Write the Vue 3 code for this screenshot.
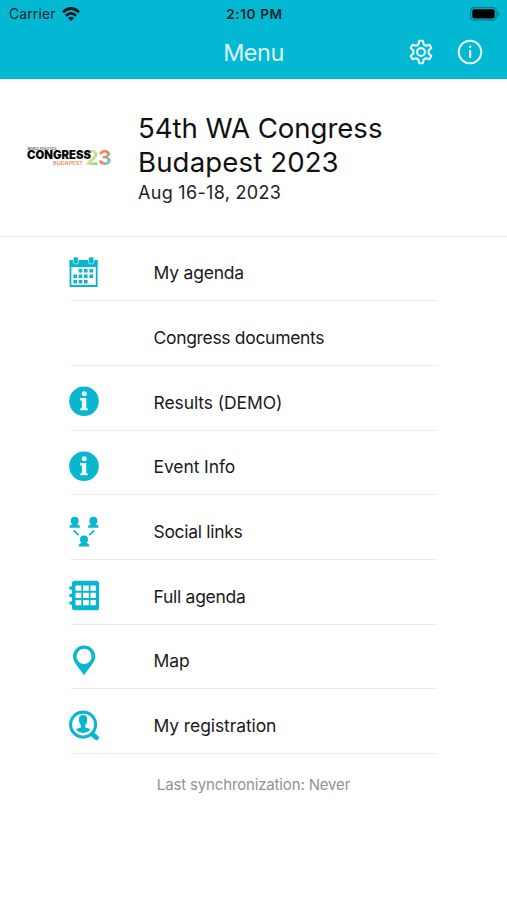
<script setup>
const items = [
  { label: 'My agenda', icon: 'calendar', key: 'my-agenda' },
  { label: 'Congress documents', icon: '', key: 'documents' },
  { label: 'Results (DEMO)', icon: 'info', key: 'results' },
  { label: 'Event Info', icon: 'info', key: 'event-info' },
  { label: 'Social links', icon: 'social', key: 'social' },
  { label: 'Full agenda', icon: 'notebook', key: 'full-agenda' },
  { label: 'Map', icon: 'pin', key: 'map' },
  { label: 'My registration', icon: 'search', key: 'registration' },
]
</script>

<template>
  <div class="screen">
    <header class="header">
      <div class="status">
        <div class="carrier">
          <span class="carrier-name">Carrier</span>
          <svg class="wifi" viewBox="0 0 18 14">
            <g fill="none" stroke="#04161a" stroke-width="2.7">
              <path d="M1 5.2Q9-2.2 17 5.2" />
              <path d="M4 8.7Q9 4.2 14 8.7" />
            </g>
            <path d="M6 10.9Q9 8.4 12 10.9L9 13.9Z" fill="#04161a" />
          </svg>
        </div>
        <span class="time">2:10 PM</span>
        <svg class="battery" viewBox="0 0 30 14">
          <rect x=".7" y=".7" width="25.6" height="12.4" rx="3.5" fill="none" stroke="#087e8e" stroke-width="1.2" />
          <rect x="2.3" y="2.3" width="22.4" height="9.2" rx="2" fill="#000" />
          <path d="M27.6 4.6Q29.4 5.4 29.4 7T27.6 9.4Z" fill="#087e8e" />
        </svg>
      </div>
      <div class="bar">
        <h1 class="bar-title">Menu</h1>
        <div class="actions">
          <svg class="action" viewBox="0 0 26 26" fill="none" stroke="#e9fbfd" stroke-width="2.1" stroke-linejoin="round">
            <path d="M11.2 1.8h3.6l.9 3.7 2.2 1.3 3.6-1.1 1.8 3.2-2.7 2.6v3l2.7 2.6-1.8 3.2-3.6-1.1-2.2 1.3-.9 3.7h-3.6l-.9-3.7-2.2-1.3-3.6 1.1-1.8-3.2 2.7-2.6v-3L2.7 8.9l1.8-3.2 3.6 1.1 2.2-1.3Z" />
            <circle cx="13" cy="13" r="3.9" />
          </svg>
          <svg class="action" viewBox="0 0 26 26">
            <circle cx="13" cy="13" r="11.3" fill="none" stroke="#e9fbfd" stroke-width="2" />
            <rect x="12" y="11" width="2.2" height="8" fill="#e9fbfd" />
            <circle cx="13.1" cy="7.8" r="1.4" fill="#e9fbfd" />
          </svg>
        </div>
      </div>
    </header>

    <section class="event">
      <svg class="logo" viewBox="0 0 86 22">
        <defs>
          <linearGradient id="two" x1="0" y1="0" x2="1" y2="1">
            <stop offset="0" stop-color="#7fd3cb" /><stop offset=".5" stop-color="#d8dc8b" /><stop offset="1" stop-color="#57ca91" />
          </linearGradient>
          <linearGradient id="three" x1="0" y1="0" x2="1" y2="1">
            <stop offset="0" stop-color="#f8b04c" /><stop offset=".45" stop-color="#f47a5b" /><stop offset=".75" stop-color="#71c9cf" /><stop offset="1" stop-color="#f29a51" />
          </linearGradient>
        </defs>
        <text x="1.5" y="4" class="logo-small" textLength="29" lengthAdjust="spacingAndGlyphs">WORLD ATHLETICS</text>
        <text x="59.5" y="18.7" class="logo-number" fill="url(#two)" textLength="13" lengthAdjust="spacingAndGlyphs">2</text>
        <text x="72" y="18.7" class="logo-number" fill="url(#three)" textLength="13.5" lengthAdjust="spacingAndGlyphs">3</text>
        <text x="1" y="13.2" class="logo-main" textLength="64" lengthAdjust="spacingAndGlyphs">CONGRESS</text>
        <text x="27" y="18.7" class="logo-city" textLength="30" lengthAdjust="spacingAndGlyphs">BUDAPEST</text>
      </svg>
      <div class="event-text">
        <h2 class="event-title"><span class="line-one">54th WA Congress</span><br><span class="line-two">Budapest 2023</span></h2>
        <p class="date">Aug 16-18, 2023</p>
      </div>
    </section>

    <nav class="menu">
      <div v-for="item in items" :key="item.key" class="row">
        <svg class="icon" viewBox="0 0 31 31">
          <g v-if="item.icon === 'calendar'">
            <path d="M1.5 4H27.7V29H1.5Z" fill="none" stroke="#08b6d0" stroke-width="1.8" />
            <rect x=".6" y="3.5" width="28" height="6.6" fill="#08b6d0" />
            <g fill="#08b6d0" stroke="#fff" stroke-width=".6"><rect x="4.2" y="0" width="5.2" height="6.8" rx="1.5" /><rect x="19.6" y="0" width="5.2" height="6.8" rx="1.5" /></g>
            <path d="M9.7 13.7h3.6M15 13.7h3.6M20.4 13.7h3.6M4.4 19.2h3.6M9.7 19.2h3.6M15 19.2h3.6M20.4 19.2h3.6M4.4 24.7h3.6M9.7 24.7h3.6M15 24.7h3.6" stroke="#08b6d0" stroke-width="3.6" />
          </g>
          <g v-else-if="item.icon === 'info'">
            <circle cx="15" cy="15.3" r="14.8" fill="#08b6d0" />
            <circle cx="15.3" cy="7.8" r="2.5" fill="#e9fbfd" />
            <path d="M11 12.1h6.3v9.4q0 1 1.5 1v1.8h-7.6v-1.8q1.7 0 1.7-1v-6q0-1.2-1.9-1.2Z" fill="#e9fbfd" />
          </g>
          <g v-else-if="item.icon === 'social'" fill="#08b6d0">
            <g v-for="p in [[5.7, 4.8], [24.3, 4.8], [15, 23.4]]" :key="p[0]" :transform="`translate(${p[0]} ${p[1]})`">
              <circle r="4" />
              <path d="M-1.7 2H1.7V3.4Q5.2 3.8 5.4 7H-5.4Q-5.2 3.8-1.7 3.4Z" />
            </g>
            <path d="M4.6 14.3l5 4.8M25.3 14.3l-5 4.8" stroke="#08b6d0" stroke-width="1.8" />
          </g>
          <g v-else-if="item.icon === 'notebook'">
            <rect x="3" y=".8" width="27" height="29.4" rx="2.5" fill="#08b6d0" />
            <path d="M1.8 8h5M1.8 15.5h5M1.8 23h5" stroke="#08b6d0" stroke-width="3.4" stroke-linecap="round" />
            <path d="M6.5 5.5h5.8v5.2H6.5zM14 5.5h5.8v5.2H14zM21.4 5.5h5.4v5.2h-5.4zM6.5 12.8h5.8V18H6.5zM14 12.8h5.8V18H14zM21.4 12.8h5.4V18h-5.4zM6.5 20.1h5.8v5.2H6.5zM14 20.1h5.8v5.2H14zM21.4 20.1h5.4v5.2h-5.4z" fill="#fff" />
          </g>
          <path v-else-if="item.icon === 'pin'" fill="#08b6d0" fill-rule="evenodd" d="M15.1 30.2C10.8 23.5 4 17.7 4 11.6a11.1 11.1 0 0 1 22.2 0C26.2 17.7 19.4 23.5 15.1 30.2ZM15.1 3.8a7.6 7.6 0 1 0 0 15.2 7.6 7.6 0 0 0 0-15.2Z" />
          <g v-else-if="item.icon === 'search'">
            <path d="M22.5 23.5l5 4.3" stroke="#08b6d0" stroke-width="4.8" stroke-linecap="round" />
            <circle cx="14.1" cy="14.6" r="12.5" fill="#fff" stroke="#08b6d0" stroke-width="3.1" />
            <path d="M10 10.2Q9.4 5 14.1 5T18.2 10.2Q18 13.8 16.3 15.6V17.4Q20.5 18.2 21.4 19.8Q18 23 14.1 23T6.8 19.8Q7.7 18.2 11.9 17.4V15.6Q10.2 13.8 10 10.2Z" fill="#08b6d0" />
          </g>
        </svg>
        <span class="label" :class="`label-${item.key}`">{{ item.label }}</span>
      </div>
    </nav>
    <p class="sync">Last synchronization: Never</p>
  </div>
</template>

<style>
body { margin: 0; background: #fff; }
</style>

<style scoped>
.screen { width: 507px; height: 900px; background: #fff; font-family: Inter, "Liberation Sans", sans-serif; color: #1a1a1a; overflow: hidden; }
h1, h2, p { margin: 0; font-weight: 400; }
svg { display: block; }
.header { height: 79px; background: #02b8d2; }
.status { height: 27px; display: grid; grid-template-columns: 1fr auto 1fr; align-items: center; padding: 0 7px 0 9px; box-sizing: border-box; color: #06252b; font-size: 13.8px; }
.carrier { display: flex; align-items: center; gap: 6px; }
.carrier-name { letter-spacing: .2px; }
.wifi { width: 18px; height: 14px; }
.time { font-size: 13.6px; font-weight: 600; letter-spacing: .6px; }
.battery { width: 30px; height: 14px; justify-self: end; }
.bar { height: 52px; display: grid; grid-template-columns: 1fr auto 1fr; align-items: center; padding: 0 24px; }
.bar-title { grid-column: 2; font-size: 23.5px; letter-spacing: -.5px; line-height: 52px; color: #dff8fb; }
.actions { display: flex; justify-content: flex-end; gap: 23px; margin-top: -2px; }
.action { width: 26px; height: 26px; }
.event { height: 157.5px; box-sizing: border-box; display: flex; border-bottom: 1px solid #e9e9e9; padding: 32px 26px 0; }
.logo { width: 86px; height: 22px; margin-top: 35px; }
.logo-small { font-size: 3px; font-weight: 600; fill: #444; }
.logo-main { font-size: 11.6px; font-weight: 900; fill: #090909; }
.logo-number { font-size: 20.5px; font-weight: 700; }
.logo-city { font-size: 5px; font-weight: 600; fill: #f38b55; }
.event-text { margin-left: 26px; white-space: nowrap; }
.event-title { font-size: 27.6px; line-height: 34px; color: #111; }
.line-one { letter-spacing: -.05px; }
.line-two { letter-spacing: .12px; }
.date { font-size: 18px; line-height: 26px; letter-spacing: .3px; color: #222; padding-top: 1px; }
.menu { padding: 0 70px 0 71px; }
.row { height: 64.7px; box-sizing: border-box; border-bottom: 1px solid #ebebeb; display: flex; align-items: center; gap: 53.5px; padding-top: 8px; }
.icon { width: 31px; height: 31px; flex: none; margin-left: -2px; }
.label { font-size: 17.5px; line-height: 24px; padding-top: 2px; white-space: nowrap; letter-spacing: -.1px; }
.label-my-agenda { letter-spacing: -.2px; }
.label-documents { letter-spacing: -.32px; }
.label-social { letter-spacing: -.3px; }
.label-full-agenda { letter-spacing: -.28px; }
.sync { text-align: center; color: #929292; font-size: 15px; line-height: 24px; letter-spacing: -.15px; margin-top: 19px; }
</style>
